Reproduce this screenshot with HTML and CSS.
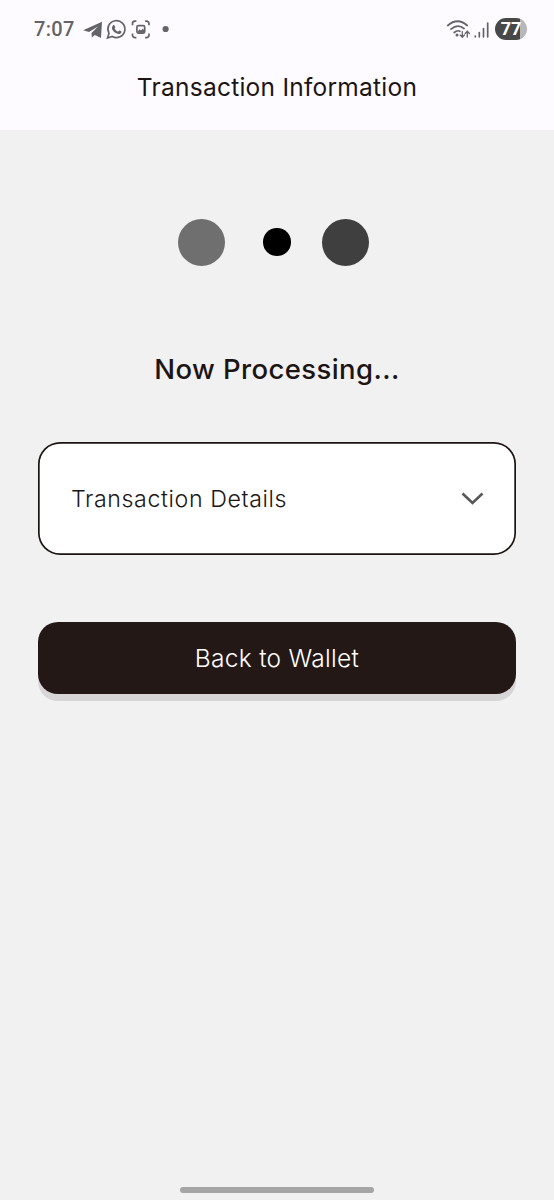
FILE: index.html
```html
<!DOCTYPE html>
<html lang="en">
<head>
<meta charset="utf-8">
<title>Transaction Information</title>
<link rel="stylesheet" href="styles.css">
</head>
<body>
<div class="screen">
  <header class="header">
    <div class="status">
      <span class="time">7:07</span>
      <svg class="notifications" width="90" height="24" viewBox="0 0 90 24" fill="none" stroke="#646466" stroke-width="1.7">
        <path d="M1.200 13.200 20 4.800 19 21 12.800 18 9.800 20.400 9.500 16 16 9.400 7 15Z" fill="#646466" stroke="none"/>
        <path d="M25.500 21 27 16.300A8.500 8.500 0 1 1 30.200 19.500Z"/>
        <path d="M31 8.400c.8-.8 1.400-.4 2.200 1.600.2.700-.8 1.200-.6 1.600.8 1.600 1.900 2.500 3.300 3.100.6.100 1-1.400 1.600-1.100 2.100 1 2.200 1.100 1.700 2.200-.9 1.700-3 1.500-5.300.3-2.700-1.500-5.500-4.900-2.900-7.700Z" fill="#646466" stroke="none"/>
        <g transform="translate(1.300 .2)"><path d="M49.200 8V6.300a2.400 2.400 0 0 1 2.400-2.400h1.500M61.800 3.900h1.500a2.400 2.400 0 0 1 2.400 2.400V8M65.700 16.200v1.800a2.400 2.400 0 0 1-2.400 2.400h-1.500M53.100 20.400h-1.500a2.400 2.400 0 0 1-2.400-2.400V16.200"/>
        <rect x="53.600" y="8.500" width="7.800" height="7.400" rx="1.500"/>
        <path d="M54 15 56.200 12 57.800 13.200 59.500 11.200 61 13.500V15.500H54Z" fill="#646466" stroke="none"/></g>
        <circle cx="83.600" cy="12" r="3.100" fill="#646466" stroke="none"/>
      </svg>
      <svg class="signals" width="46" height="24" viewBox="0 0 46 24" fill="none" stroke="#646466" stroke-width="1.700" stroke-linecap="round">
        <path d="M1.800 8.500Q11.500 0 21.200 8.500M5 12.200Q11.500 6.500 18 11.500M8.200 15.500Q11.500 12.800 13.800 14.300"/>
        <circle cx="11" cy="18" r="1.500" fill="#646466" stroke="none"/>
        <path d="M16.300 14.500V20M14.200 18 16.300 20.200 18.400 18M21.300 20V14.500M19.200 16.500 21.300 14.300 23.400 16.500" stroke-width="1.300"/>
        <path d="M29.300 19V19.800M33.300 15.500V19.800M37.500 11.500V19.800M41.700 6.200V19.800" stroke-width="1.700"/>
      </svg>
      <span class="battery">77</span>
    </div>
    <h1 class="title">Transaction Information</h1>
  </header>
  <main class="content">
    <div class="loader">
      <span class="dot dot-light"></span>
      <span class="dot dot-small"></span>
      <span class="dot dot-dark"></span>
    </div>
    <h2 class="processing">Now Processing...</h2>
    <div class="details">
      <span>Transaction Details</span>
      <svg width="24" height="16" viewBox="0 0 24 16" fill="none" stroke="#58585a" stroke-width="2.600"><path d="M2.500 2.500 12.500 12 22.500 2.500"/></svg>
    </div>
    <button class="back" type="button">Back to Wallet</button>
  </main>
  <div class="home-bar"></div>
</div>
</body>
</html>
```
FILE: styles.css
```css
* { box-sizing: border-box; }
body { margin: 0; font-family: Inter, "Liberation Sans", sans-serif; color: #1c1514; background: #f1f1f1; }
.screen { height: 1200px; display: flex; flex-direction: column; }
.header { height: 130px; background: #fdfbff; }
.status { height: 58px; padding: 0 27px 0 34px; display: flex; align-items: center; }
.time { width: 48px; font: 500 20px/24px Roboto, sans-serif; letter-spacing: .3px; color: #646466; white-space: nowrap; }
.notifications { flex: none; margin-top: -1px; }
.signals { flex: none; margin-left: auto; margin-right: 3px; }
.battery { width: 32px; height: 22px; border-radius: 11px; background: linear-gradient(90deg, #484848 77%, #b7b7b9 77%); color: #fff; font: 700 18px/22px Roboto, sans-serif; text-align: center; }
.title { margin: 14px 0 0; font-size: 24.500px; font-weight: 400; line-height: 30px; text-align: center; letter-spacing: .25px; white-space: nowrap; }
.content { flex: 1; padding: 89px 38px 0; }
.loader { height: 46px; padding-left: 140px; display: flex; align-items: center; }
.dot { width: 47px; height: 47px; border-radius: 50%; flex: none; }
.dot-light { background: #6f6f6f; }
.dot-small { width: 27.500px; height: 27.500px; margin: 0 31px 0 38px; background: #000; }
.dot-dark { background: #3f3f3f; }
.processing { margin: 86px 0 0; font-size: 27.500px; font-weight: 500; line-height: 36px; text-align: center; letter-spacing: .4px; white-space: nowrap; }
.details { height: 112.500px; margin-top: 55px; padding: 1px 32px 0 33px; border-radius: 22px; background: #fff; box-shadow: inset 0 0 0 1.700px #1c1514; display: flex; align-items: center; justify-content: space-between; font-size: 23.200px; font-weight: 300; letter-spacing: .6px; white-space: nowrap; }
.back { display: block; width: 100%; height: 72px; margin-top: 67.500px; padding: 0; border: 0; border-radius: 20px; background: #231815; box-shadow: 0 7px 0 #d8d5d6; color: #fff; font: 300 24.500px/30px Inter, sans-serif; letter-spacing: .3px; }
.home-bar { width: 194px; height: 6px; margin: 0 auto 7.500px; border-radius: 3px; background: #a5a5a5; }
```
